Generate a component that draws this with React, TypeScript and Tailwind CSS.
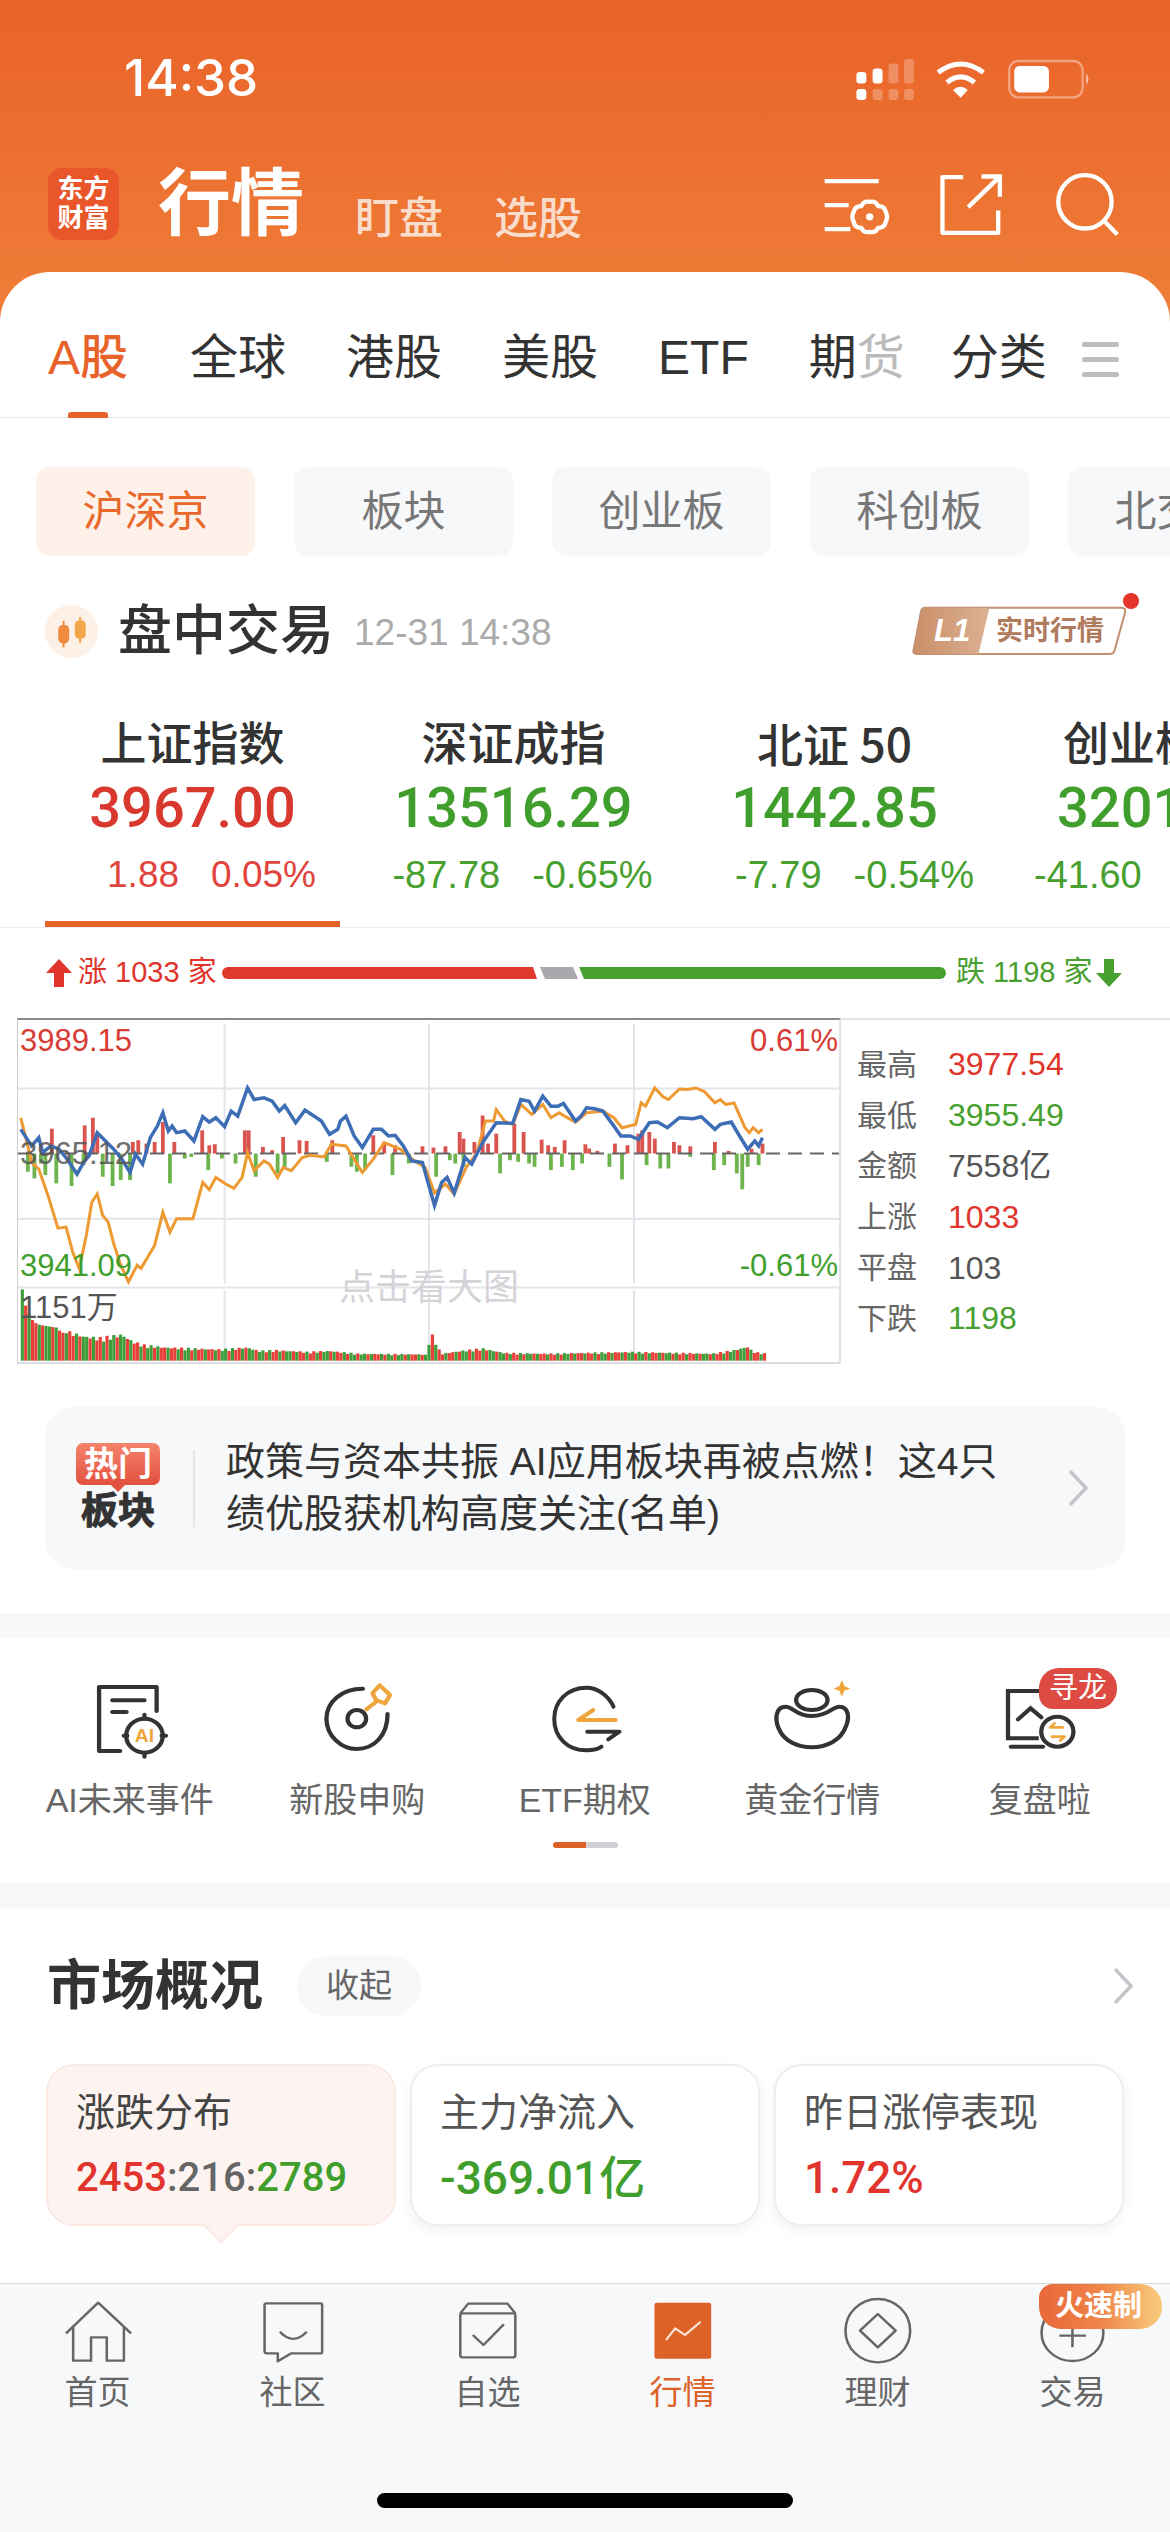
const RED = "#e0342c";
const GREEN = "#47a02f";

const tabs = ["全球", "港股", "美股", "ETF"];
const chips = ["板块", "创业板", "科创板", "北交所"];

const bluePts =
  "35,420 45,445 55,470 68,445 75,490 90,470 105,480 120,510 138,555 150,520 160,500 175,430 190,455 205,480 220,510 235,550 245,495 258,525 272,445 285,410 295,370 305,425 312,410 320,430 335,425 352,455 368,382 380,398 392,385 408,412 420,365 432,380 450,295 462,330 480,325 495,335 508,365 518,348 538,400 555,362 570,378 585,395 600,435 615,420 620,395 630,380 645,440 660,475 680,420 695,420 708,440 720,438 735,470 750,515 770,520 780,580 792,650 805,580 815,565 828,612 848,505 860,525 880,460 905,400 935,402 950,330 965,335 975,365 990,320 1005,350 1018,350 1028,342 1050,395 1060,380 1070,355 1085,358 1100,365 1118,405 1133,440 1150,440 1165,450 1185,400 1200,398 1218,415 1240,385 1265,388 1280,382 1305,420 1315,405 1335,398 1350,440 1365,480 1378,455 1385,470 1392,445";
const orangePts =
  "35,385 45,450 55,520 68,540 85,620 103,718 118,715 130,790 142,840 155,740 165,640 175,615 185,680 195,700 205,765 218,830 232,880 248,830 255,840 280,770 295,670 308,730 320,690 350,690 368,580 380,602 392,565 410,585 425,598 440,565 450,490 462,545 480,515 490,525 505,565 515,535 530,545 550,505 565,498 590,503 603,465 630,470 660,550 680,510 700,460 730,480 755,515 775,535 792,612 812,585 828,615 850,535 870,490 885,395 900,395 905,360 920,395 935,405 950,345 970,375 990,345 1005,385 1020,370 1030,380 1050,398 1070,370 1100,365 1120,385 1135,415 1160,405 1170,340 1178,350 1195,295 1210,322 1220,330 1240,298 1255,300 1270,295 1285,305 1305,340 1315,330 1325,345 1340,340 1360,415 1368,430 1375,415 1385,430 1392,420";

// x, height in chart units
const upBars = [[92,75],[152,85],[167,108],[175,60],[240,35],[250,40],[265,30],[280,35],[295,95],[316,35],[367,70],[380,25],[390,28],[445,70],[452,70],[478,20],[495,10],[515,50],[545,40],[558,38],[605,40],[680,55],[700,35],[720,25],[770,22],[790,18],[812,22],[838,65],[845,45],[865,35],[880,115],[890,30],[905,60],[938,90],[955,65],[988,42],[1000,25],[1012,20],[1030,40],[1068,28],[1075,15],[1090,8],[1122,30],[1145,25],[1165,60],[1172,70],[1185,65],[1195,45],[1230,35],[1240,25],[1260,22],[1305,35],[1330,8],[1372,15],[1392,30]];
const downBars = [[48,55],[60,75],[72,30],[80,65],[100,90],[128,98],[150,35],[185,70],[203,98],[218,80],[235,80],[308,90],[335,15],[347,10],[378,50],[403,15],[428,30],[465,70],[505,60],[518,40],[595,25],[640,40],[650,55],[665,50],[715,65],[745,30],[795,70],[820,20],[830,30],[845,40],[912,60],[930,20],[945,25],[965,30],[975,40],[1005,50],[1025,40],[1045,50],[1062,30],[1112,40],[1135,78],[1180,35],[1205,45],[1220,45],[1260,10],[1303,50],[1322,35],[1345,60],[1355,108],[1365,40],[1385,35]];

const volKnots = [[38,215],[45,160],[55,125],[65,110],[80,105],[100,100],[110,85],[130,80],[150,70],[180,65],[220,75],[240,55],[260,45],[300,38],[350,35],[400,32],[450,38],[470,28],[500,30],[560,25],[600,28],[650,20],[778,18],[787,85],[795,45],[805,20],[840,28],[880,35],[920,22],[1000,20],[1150,25],[1300,20],[1340,30],[1365,40],[1375,25],[1400,20]];

function volAt(x: number) {
  for (let i = 1; i < volKnots.length; i++) {
    const [x0, h0] = volKnots[i - 1];
    const [x1, h1] = volKnots[i];
    if (x <= x1) return h0 + ((h1 - h0) * (x - x0)) / (x1 - x0);
  }
  return 20;
}

const volBars = Array.from({ length: 220 }, (_, i) => {
  const x = 38 + i * 6.2;
  const noisy = x < 120 || (x > 775 && x < 800) ? 1 : 0.85 + 0.25 * Math.abs(Math.sin(i * 1.7));
  return { x, h: volAt(x) * noisy, up: Math.sin(i * 2.3) > 0 };
});

function StatusIcons() {
  return (
    <svg viewBox="190 15 730 130" className="w-[243px] h-[43px]">
      <g fill="#fff">
        <rect x="198" y="60" width="30" height="35" rx="10" />
        <rect x="198" y="112" width="30" height="33" rx="10" />
        <rect x="247" y="50" width="30" height="45" rx="10" />
      </g>
      <g fill="#fff" opacity="0.25">
        <rect x="247" y="112" width="30" height="33" rx="10" />
        <rect x="295" y="35" width="30" height="60" rx="10" />
        <rect x="295" y="112" width="30" height="33" rx="10" />
        <rect x="342" y="20" width="30" height="75" rx="10" />
        <rect x="342" y="112" width="30" height="33" rx="10" />
      </g>
      <path d="M445 62 Q513 10 582 62 M472 92 Q513 58 555 92" fill="none" stroke="#fff" strokeWidth="15" />
      <path d="M490 115 Q513 95 535 115 L513 138 Z" fill="#fff" />
      <rect x="660" y="27" width="222" height="110" rx="28" fill="none" stroke="#fff" strokeOpacity="0.4" strokeWidth="7" />
      <rect x="675" y="42" width="105" height="80" rx="16" fill="#fff" />
      <path d="M892 65 Q908 82 892 100 Z" fill="#fff" opacity="0.55" />
    </svg>
  );
}

function HeaderActions() {
  return (
    <svg viewBox="100 360 890 200" className="w-[297px] h-[67px]" fill="none" stroke="#fff" strokeWidth="13">
      <path d="M105 390 H267 M105 462 H177 M105 534 H182" />
      <path d="M240 452 Q258 448 265 465 Q285 465 288 482 Q296 497 288 512 Q285 530 265 530 Q258 546 240 542 Q222 546 215 530 Q195 530 192 512 Q184 497 192 482 Q195 465 215 465 Q222 448 240 452 Z" strokeLinejoin="round" />
      <circle cx="240" cy="497" r="11" fill="#fff" stroke="none" />
      <path d="M520 378 H458 V545 H625 V478" strokeLinejoin="round" />
      <path d="M535 468 L628 378 M575 376 H630 V437" />
      <circle cx="885" cy="452" r="80" />
      <path d="M945 512 L982 550" />
    </svg>
  );
}

function CandleIcon() {
  return (
    <svg viewBox="45 40 160 160" className="w-[53px] h-[53px] shrink-0">
      <circle cx="125" cy="120" r="80" fill="#fdf0e6" />
      <path d="M101 88 V168" stroke="#ef8a3e" strokeWidth="6" />
      <rect x="85" y="100" width="33" height="56" rx="14" fill="#ef8a3e" />
      <path d="M151 76 V155" stroke="#f3a64a" strokeWidth="6" />
      <rect x="135" y="86" width="33" height="56" rx="14" fill="#f3a64a" />
    </svg>
  );
}

function LevelBadge() {
  return (
    <div className="relative ml-auto mr-[42px] w-[217px] h-[52px] shrink-0">
      <svg viewBox="30 45 650 155" preserveAspectRatio="none" className="absolute inset-0 w-full h-full">
        <defs>
          <linearGradient id="lv" x1="0" x2="1" y1="0" y2="0">
            <stop offset="0" stopColor="#c98f68" />
            <stop offset="1" stopColor="#dcb193" />
          </linearGradient>
        </defs>
        <path d="M72 53 H660 Q674 53 671 68 L640 180 Q636 191 625 191 H48 Q34 191 38 178 L60 64 Q62 53 72 53 Z" fill="#fff" stroke="#c08f70" strokeWidth="6" />
        <path d="M72 53 H265 L232 191 H48 Q34 191 38 178 L60 64 Q62 53 72 53 Z" fill="url(#lv)" />
      </svg>
      <span className="absolute left-[23px] top-[8px] text-[31px] leading-[36px] font-bold italic text-white">L1</span>
      <span className="absolute left-[85px] top-[11px] text-[27px] leading-[30px] font-semibold text-[#b07a5c] whitespace-nowrap">实时行情</span>
      <span className="absolute right-[-11px] top-[-12px] w-[16px] h-[16px] rounded-full bg-[#e5342a]" />
    </div>
  );
}

function IntradayChart() {
  return (
    <div className="relative w-[824px] h-[346px] shrink-0 border-t-2 border-t-[#8a8a8a] border-l border-l-[#ccc] border-r-2 border-r-[#e3e4ea] border-b-2 border-b-[#dcdde2]">
      <svg viewBox="30 90 1502 1032" preserveAspectRatio="none" className="absolute inset-0 w-full h-full">
        <g stroke="#e4e5ea" strokeWidth="2" fill="none">
          <path vectorEffect="non-scaling-stroke" d="M30 297 H1532 M30 690 H1532 M30 897 H1532" />
          <path vectorEffect="non-scaling-stroke" d="M408 100 V885 M782 100 V885 M1157 100 V885 M408 905 V1118 M782 905 V1118 M1157 905 V1118" />
        </g>
        {upBars.map(([x, h]) => (
          <rect key={"u" + x} x={x - 3.5} y={493 - h} width="7" height={h} fill="#d9534f" />
        ))}
        {downBars.map(([x, h]) => (
          <rect key={"d" + x} x={x - 3.5} y={493} width="7" height={h} fill="#6db44e" />
        ))}
        <path vectorEffect="non-scaling-stroke" d="M30 493 H1532" stroke="#666" strokeWidth="2" strokeDasharray="14 8" />
        <polyline vectorEffect="non-scaling-stroke" points={orangePts} fill="none" stroke="#ee9a33" strokeWidth="3" />
        <polyline vectorEffect="non-scaling-stroke" points={bluePts} fill="none" stroke="#3d6db5" strokeWidth="3.5" />
        {volBars.map((b) => (
          <rect key={b.x} x={b.x - 3} y={1118 - b.h} width="5.8" height={b.h} fill={b.up ? "#e8403a" : "#3f9e3a"} />
        ))}
      </svg>
      <span className="absolute left-[2px] top-[4px] text-[31px] leading-[34px] text-[#d83a34]">3989.15</span>
      <span className="absolute right-[1px] top-[4px] text-[31px] leading-[34px] text-[#d83a34]">0.61%</span>
      <span className="absolute left-[2px] top-[117px] text-[31px] leading-[34px] text-[#555] opacity-85">3965.12</span>
      <span className="absolute left-[2px] top-[229px] text-[31px] leading-[34px] text-[#3f9e2c]">3941.09</span>
      <span className="absolute right-[1px] top-[229px] text-[31px] leading-[34px] text-[#3f9e2c]">-0.61%</span>
      <span className="absolute left-[2px] top-[271px] text-[31px] leading-[34px] text-[#555]">1151万</span>
      <span className="absolute left-[321px] top-[248px] text-[36px] leading-[40px] text-[#d4d4d8] whitespace-nowrap">点击看大图</span>
    </div>
  );
}

const stats = [
  ["最高", "3977.54", RED],
  ["最低", "3955.49", GREEN],
  ["金额", "7558亿", "#555"],
  ["上涨", "1033", RED],
  ["平盘", "103", "#555"],
  ["下跌", "1198", GREEN],
];

function AiIcon() {
  return (
    <svg viewBox="162 114 235 252" preserveAspectRatio="none" className="w-[84px] h-[84px]" fill="none" stroke="#333" strokeWidth="12" strokeLinecap="round">
      <path d="M252 333 H193 V141 H354 V213" strokeLinejoin="round" />
      <path d="M230 181 H320 M230 216 H270" />
      <circle cx="320" cy="287" r="51" />
      <path d="M320 224 V236 M320 338 V350 M262 287 H272 M368 287 H380" />
      <text x="320" y="307" textAnchor="middle" fontSize="54" fontWeight="700" fill="#f0a53c" stroke="none">AI</text>
    </svg>
  );
}

function IpoIcon() {
  return (
    <svg viewBox="801 114 235 252" preserveAspectRatio="none" className="w-[84px] h-[84px]" fill="none" stroke="#333" strokeWidth="12" strokeLinecap="round">
      <path d="M935 146 C875 146 833 186 833 236 C833 288 875 327 918 327 C965 327 1004 288 1004 222" />
      <circle cx="918" cy="236" r="26" />
      <path d="M945 208 L975 183" stroke="#f0a53c" />
      <path d="M982 136 L1011 165 L997 190 L972 180 L962 160 Z" stroke="#f0a53c" strokeLinejoin="round" />
    </svg>
  );
}

function EtfIcon() {
  return (
    <svg viewBox="728 864 112 252" preserveAspectRatio="none" className="w-[84px] h-[84px]" fill="none" stroke="#333" strokeWidth="4" strokeLinecap="round" strokeLinejoin="round">
      <path vectorEffect="non-scaling-stroke" d="M822 950 C815 915 800 893 786 893 C760 893 743 935 743 987 C743 1040 760 1081 786 1081 C795 1081 802 1077 806 1070" />
      <path vectorEffect="non-scaling-stroke" d="M775 990 H825 M775 990 L795 960" stroke="#f0a53c" />
      <path vectorEffect="non-scaling-stroke" d="M787 1025 H830 L815 1048" />
    </svg>
  );
}

function GoldIcon() {
  return (
    <svg viewBox="476 114 235 252" preserveAspectRatio="none" className="w-[84px] h-[84px]" fill="none" stroke="#333" strokeWidth="12">
      <ellipse cx="593" cy="180" rx="44" ry="30" />
      <path d="M520 200 C490 200 490 240 500 265 C515 305 555 322 593 322 C635 322 675 300 688 260 C700 230 695 200 670 200 C650 200 640 228 593 228 C550 228 540 200 520 200 Z" fill="#fff" />
      <path d="M677 120 L684 138 L700 146 L684 152 L677 170 L670 152 L654 146 L670 138 Z" fill="#f0a53c" stroke="none" />
    </svg>
  );
}

function ReviewIcon() {
  return (
    <svg viewBox="1114 114 235 252" preserveAspectRatio="none" className="w-[84px] h-[84px]" fill="none" stroke="#333" strokeWidth="12" strokeLinecap="round">
      <path d="M1235 153 H1142 V295 H1228" strokeLinecap="butt" />
      <path d="M1150 320 H1240" />
      <path d="M1170 238 L1205 205 L1235 232" />
      <circle cx="1280" cy="275" r="45" fill="#fff" />
      <path d="M1295 262 H1260 M1260 262 L1272 250 M1265 290 H1300 M1300 290 L1288 302" stroke="#f0a53c" strokeWidth="8" />
    </svg>
  );
}

const shortcuts = [
  { label: "AI未来事件", Icon: AiIcon },
  { label: "新股申购", Icon: IpoIcon },
  { label: "ETF期权", Icon: EtfIcon },
  { label: "黄金行情", Icon: GoldIcon },
  { label: "复盘啦", Icon: ReviewIcon },
];

function Chevron() {
  return (
    <svg viewBox="0 0 20 36" className="w-[20px] h-[36px] shrink-0" fill="none" stroke="#c4c5ca" strokeWidth="3.5">
      <path d="M2 1 L18 18 L2 35" />
    </svg>
  );
}

const navIcons = [
  {
    label: "首页",
    view: "70 78 235 216",
    body: <path d="M98 190 L188 98 L280 190 M118 170 V272 H168 V202 H212 V272 H260 V170" />,
  },
  {
    label: "社区",
    view: "617 78 235 216",
    body: (
      <>
        <path d="M660 100 H812 Q816 100 816 105 V245 Q816 250 810 250 H730 L692 274 V250 H662 Q655 250 655 243 V105 Q655 100 660 100 Z" />
        <path d="M698 185 Q735 228 773 185" />
      </>
    ),
  },
  {
    label: "自选",
    view: "1163 78 235 216",
    body: (
      <>
        <rect x="1203" y="130" width="154" height="132" rx="6" />
        <path d="M1203 130 L1225 101 H1335 L1357 130 M1238 195 L1268 225 L1325 163" />
      </>
    ),
  },
  {
    label: "行情",
    view: "111 78 231 216",
    active: true,
    body: (
      <>
        <rect x="148" y="98" width="156" height="168" rx="6" fill="#dc6228" stroke="none" />
        <path d="M180 210 L205 175 L232 195 L275 155" stroke="#fde7da" strokeWidth="6" />
      </>
    ),
  },
  {
    label: "理财",
    view: "648 78 231 216",
    body: (
      <>
        <ellipse cx="763" cy="182" rx="89" ry="95" />
        <path d="M763 132 L812 182 L763 232 L714 182 Z" />
      </>
    ),
  },
  {
    label: "交易",
    view: "1184 78 231 216",
    body: (
      <>
        <circle cx="1298" cy="188" r="85" />
        <path d="M1262 197 H1335 M1298 165 V232" />
      </>
    ),
  },
];

export default function App() {
  return (
    <div className="relative w-[1170px] h-[2532px] flex flex-col overflow-hidden bg-white text-[#333] [font-family:'Liberation_Sans','Noto_Sans_CJK_SC',sans-serif]">
      {/* orange header */}
      <div className="h-[322px] shrink-0 bg-gradient-to-b from-[#e96228] to-[#ef7e38]">
        <div className="flex items-center justify-between pt-[50px] h-[106px] pl-[124px] pr-[74px]">
          <span className="text-[51px] leading-[56px] font-medium text-white [font-family:Inter,sans-serif]">14:38</span>
          <StatusIcons />
        </div>
        <div className="flex items-center mt-[62px] h-[72px] pl-[48px] pr-[50px]">
          <div className="w-[71px] h-[72px] rounded-[14px] bg-[#e8562a] flex flex-col items-center justify-center text-white font-bold text-[26px] leading-[29px]">
            <span>东方</span>
            <span>财富</span>
          </div>
          <span className="ml-[39px] text-[73px] leading-[72px] font-semibold text-white">行情</span>
          <span className="ml-[51px] mt-[30px] text-[44px] leading-[44px] font-medium text-white/75">盯盘</span>
          <span className="ml-[51px] mt-[30px] text-[44px] leading-[44px] font-medium text-white/75">选股</span>
          <div className="ml-auto">
            <HeaderActions />
          </div>
        </div>
      </div>

      {/* white sheet */}
      <div className="relative -mt-[50px] rounded-t-[50px] bg-white">
        <div className="flex h-[146px] pt-[62px] pl-[48px] border-b border-[#e8e8ea] text-[48px] leading-[48px] whitespace-nowrap">
          <div className="relative h-[84px] mr-[62px] font-medium text-[#e8632a]">
            A股
            <span className="absolute left-[20px] bottom-0 w-[40px] h-[6px] rounded-t-[3px] bg-[#e8632a]" />
          </div>
          {tabs.map((t) => (
            <span key={t} className="mr-[60px]">
              {t}
            </span>
          ))}
          <span className="mr-[46px]">
            期<span className="text-[#bbb]">货</span>
          </span>
          <span>分类</span>
          <div className="ml-[35px] mt-[8px] w-[37px] h-[35px] flex flex-col justify-between">
            <span className="h-[5px] rounded-full bg-[#bdbdbd]" />
            <span className="h-[5px] rounded-full bg-[#bdbdbd]" />
            <span className="h-[5px] rounded-full bg-[#bdbdbd]" />
          </div>
        </div>

        <div className="flex gap-[39px] pt-[49px] pl-[36px] whitespace-nowrap overflow-hidden">
          <div className="w-[219px] h-[89px] shrink-0 rounded-[14px] bg-[#fdf1ea] text-[#e8692b] text-[42px] flex items-center justify-center">沪深京</div>
          {chips.map((c) => (
            <div key={c} className="w-[219px] h-[89px] shrink-0 rounded-[14px] bg-[#f7f8fa] text-[#777] text-[42px] flex items-center justify-center">
              {c}
            </div>
          ))}
        </div>

        <div className="flex items-center mt-[48px] h-[54px] pl-[45px]">
          <CandleIcon />
          <span className="ml-[20px] text-[54px] leading-[54px] font-medium text-[#333]">盘中交易</span>
          <span className="ml-[20px] text-[37px] text-[#aaa] mt-[4px]">12-31 14:38</span>
          <LevelBadge />
        </div>

        {/* index strip */}
        <div className="flex h-[270px] pl-[32px] overflow-hidden border-b border-[#ececee] whitespace-nowrap">
          <div className="relative w-[321px] shrink-0 flex flex-col items-center pt-[59px]">
            <span className="text-[46px] leading-[54px] font-medium">上证指数</span>
            <span className="mt-[5px] text-[56px] leading-[64px] font-medium [font-family:Roboto,sans-serif] text-[#d9382f]">3967.00</span>
            <div className="mt-[13px] ml-[38px] flex gap-[32px] text-[37px] leading-[44px] text-[#e0443c]">
              <span>1.88</span>
              <span>0.05%</span>
            </div>
            <span className="absolute left-[13px] bottom-0 w-[295px] h-[6px] bg-[#e8632a]" />
          </div>
          <div className="w-[321px] shrink-0 flex flex-col items-center pt-[59px]">
            <span className="text-[46px] leading-[54px] font-medium">深证成指</span>
            <span className="mt-[5px] text-[56px] leading-[64px] font-medium [font-family:Roboto,sans-serif] text-[#3f9e2c]">13516.29</span>
            <div className="mt-[13px] ml-[18px] flex gap-[32px] text-[38px] leading-[44px] text-[#47a02f]">
              <span>-87.78</span>
              <span>-0.65%</span>
            </div>
          </div>
          <div className="w-[321px] shrink-0 flex flex-col items-center pt-[59px]">
            <span className="-mt-[2px] mb-[2px] text-[46px] leading-[54px] font-medium [font-family:'Noto_Sans_CJK_SC',sans-serif]">北证 50</span>
            <span className="mt-[5px] text-[56px] leading-[64px] font-medium [font-family:Roboto,sans-serif] text-[#3f9e2c]">1442.85</span>
            <div className="mt-[13px] ml-[40px] flex gap-[32px] text-[38px] leading-[44px] text-[#47a02f]">
              <span>-7.79</span>
              <span>-0.54%</span>
            </div>
          </div>
          <div className="w-[321px] shrink-0 flex flex-col items-start pt-[59px]">
            <span className="ml-[68px] text-[46px] leading-[54px] font-medium">创业板指</span>
            <span className="ml-[62px] mt-[5px] text-[56px] leading-[64px] font-medium [font-family:Roboto,sans-serif] text-[#3f9e2c]">3201</span>
            <span className="ml-[39px] mt-[13px] text-[38px] leading-[44px] text-[#47a02f]">-41.60</span>
          </div>
        </div>

        {/* rise / fall bar */}
        <div className="flex items-center h-[90px] pl-[46px] text-[29px] whitespace-nowrap">
          <svg viewBox="0 0 26 28" className="w-[26px] h-[28px] shrink-0" fill={RED}>
            <path d="M13 0 L26 14 H18 V28 H8 V14 H0 Z" />
          </svg>
          <span className="ml-[6px] w-[144px] text-[#e0342c]">涨 1033 家</span>
          <div className="w-[315px] h-[12px] rounded-l-full bg-[#e0392e] [clip-path:polygon(0_0,calc(100%-4px)_0,100%_100%,0_100%)]" />
          <div className="ml-[3px] w-[38px] h-[12px] bg-[#a9a9ad] [clip-path:polygon(0_0,calc(100%-5px)_0,100%_100%,5px_100%)]" />
          <div className="ml-[1px] w-[367px] h-[12px] rounded-r-full bg-[#47a02f] [clip-path:polygon(0_0,100%_0,100%_100%,5px_100%)]" />
          <span className="ml-[10px] w-[140px] text-[#47a02f]">跌 1198 家</span>
          <svg viewBox="0 0 26 28" className="w-[26px] h-[28px] shrink-0" fill={GREEN}>
            <path d="M8 0 H18 V14 H26 L13 28 L0 14 H8 Z" />
          </svg>
        </div>

        {/* chart and side stats */}
        <div className="flex pl-[17px]">
          <IntradayChart />
          <div className="flex-1 border-t-2 border-[#e5e6ea] pt-[19px] pl-[16px]">
            {stats.map(([k, v, c]) => (
              <div key={k} className="flex items-center h-[50.8px]">
                <span className="w-[91px] text-[30px] text-[#666]">{k}</span>
                <span className="text-[32px]" style={{ color: c }}>
                  {v}
                </span>
              </div>
            ))}
          </div>
        </div>

        {/* hot sector banner */}
        <div className="mt-[43px] mx-[45px] h-[162px] rounded-[28px] bg-[#f7f8fa] flex items-center pl-[31px] pr-[37px]">
          <div className="w-[84px] shrink-0 flex flex-col items-center">
            <div className="relative w-[84px] h-[42px] rounded-[7px] bg-gradient-to-b from-[#f4836b] to-[#e2503f] text-white font-bold text-[34px] leading-[42px] text-center">
              热门
              <span className="absolute left-[37px] bottom-[-5px] w-[10px] h-[10px] rotate-45 bg-[#e2503f]" />
            </div>
            <span className="mt-[6px] text-[37px] leading-[42px] font-bold text-[#333] [-webkit-text-stroke:1px_#333]">板块</span>
          </div>
          <div className="ml-[33px] w-[2px] h-[77px] bg-[#e4e4e8] shrink-0" />
          <div className="ml-[31px] text-[39px] leading-[52.5px] text-[#333] whitespace-nowrap">
            <p>政策与资本共振 AI应用板块再被点燃！这4只</p>
            <p>绩优股获机构高度关注(名单)</p>
          </div>
          <div className="ml-auto">
            <Chevron />
          </div>
        </div>

        <div className="mt-[44px] h-[25px] bg-[#f7f8fa]" />

        {/* shortcuts */}
        <div className="h-[245px] pt-[40px]">
          <div className="flex pl-[16px]">
            {shortcuts.map(({ label, Icon }) => (
              <div key={label} className="relative w-[227.5px] shrink-0 flex flex-col items-center">
                <Icon />
                <span className="mt-[18px] text-[34px] leading-[40px] text-[#666] whitespace-nowrap">{label}</span>
                {label === "复盘啦" && (
                  <span className="absolute left-[113px] top-[-10px] w-[78px] h-[41px] rounded-[20px] rounded-bl-[14px] bg-[#dc4a42] text-white text-[29px] leading-[41px] text-center">
                    寻龙
                  </span>
                )}
              </div>
            ))}
          </div>
          <div className="mt-[22px] mx-auto w-[65px] h-[6px] flex rounded-full overflow-hidden">
            <span className="w-[33px] bg-[#dc6228]" />
            <span className="flex-1 bg-[#cfd0d3]" />
          </div>
        </div>

        <div className="h-[25px] bg-[#f7f8fa]" />

        {/* market overview */}
        <div className="flex items-center mt-[48px] h-[60px] pl-[47px] pr-[37px]">
          <span className="text-[54px] leading-[60px] font-semibold text-[#333]">市场概况</span>
          <span className="ml-[34px] w-[124px] h-[60px] rounded-full bg-[#f7f8fa] text-[33px] text-[#666] flex items-center justify-center">收起</span>
          <div className="ml-auto">
            <Chevron />
          </div>
        </div>

        <div className="flex gap-[14px] mt-[48px] pl-[46px] whitespace-nowrap">
          <div className="relative w-[350px] h-[162px] shrink-0 rounded-[28px] border-2 border-[#fbeae4] bg-[#fdf4f1] pl-[28px] pt-[23px]">
            <p className="text-[39px] leading-[48px] text-[#444]">涨跌分布</p>
            <p className="mt-[17px] text-[40px] leading-[48px] font-medium [font-family:Roboto,sans-serif]">
              <span className="text-[#e0342c]">2453</span>
              <span className="text-[#666]">:216:</span>
              <span className="text-[#3f9e2c]">2789</span>
            </p>
            <span className="absolute left-[160px] bottom-[-14px] w-[26px] h-[26px] rotate-45 bg-[#fdf4f1] border-r-2 border-b-2 border-[#fbeae4]" />
          </div>
          <div className="w-[350px] h-[162px] shrink-0 rounded-[28px] border-2 border-[#eeeeee] bg-white shadow-[0_5px_14px_rgba(0,0,0,0.06)] pl-[28px] pt-[23px]">
            <p className="text-[39px] leading-[48px] text-[#555]">主力净流入</p>
            <p className="mt-[17px] text-[46px] leading-[48px] font-medium [font-family:Roboto,'Noto_Sans_CJK_SC',sans-serif] text-[#3f9e2c]">-369.01亿</p>
          </div>
          <div className="w-[350px] h-[162px] shrink-0 rounded-[28px] border-2 border-[#eeeeee] bg-white shadow-[0_5px_14px_rgba(0,0,0,0.06)] pl-[28px] pt-[23px]">
            <p className="text-[39px] leading-[48px] text-[#555]">昨日涨停表现</p>
            <p className="mt-[17px] text-[44px] leading-[48px] font-medium [font-family:Roboto,sans-serif] text-[#e0342c]">1.72%</p>
          </div>
        </div>

        {/* next row is cut off by the tab bar, only the tops of the digits show */}
        <div className="relative h-[57px] overflow-hidden">
          <span className="absolute left-[683px] top-[52px] text-[30px] leading-[34px] text-[#47a02f]">1198</span>
        </div>
      </div>

      {/* bottom tab bar */}
      <div className="relative flex-1 bg-[#f7f8fa] border-t border-[#dcdcde]">
        <div className="flex pt-[12px]">
          {navIcons.map((n) => (
            <div key={n.label} className="relative w-[195px] shrink-0 flex flex-col items-center">
              <svg viewBox={n.view} preserveAspectRatio="none" className="w-[84px] h-[72px]" fill="none" stroke="#666" strokeWidth="7" strokeLinejoin="round">
                {n.body}
              </svg>
              <span className={"mt-[5px] text-[33px] leading-[40px] " + (n.active ? "text-[#dc6228]" : "text-[#666]")}>{n.label}</span>
            </div>
          ))}
        </div>
        <span className="absolute left-[1039px] top-0 w-[123px] h-[45px] rounded-b-[22px] rounded-tr-[22px] rounded-tl-[14px] bg-gradient-to-r from-[#e8683a] via-[#ef8448] to-[#f6cd7b] text-white font-bold text-[29px] leading-[45px] pl-[16px] whitespace-nowrap">
          火速制
        </span>
        <div className="mt-[80px] mx-auto w-[416px] h-[15px] rounded-full bg-black" />
      </div>
    </div>
  );
}
